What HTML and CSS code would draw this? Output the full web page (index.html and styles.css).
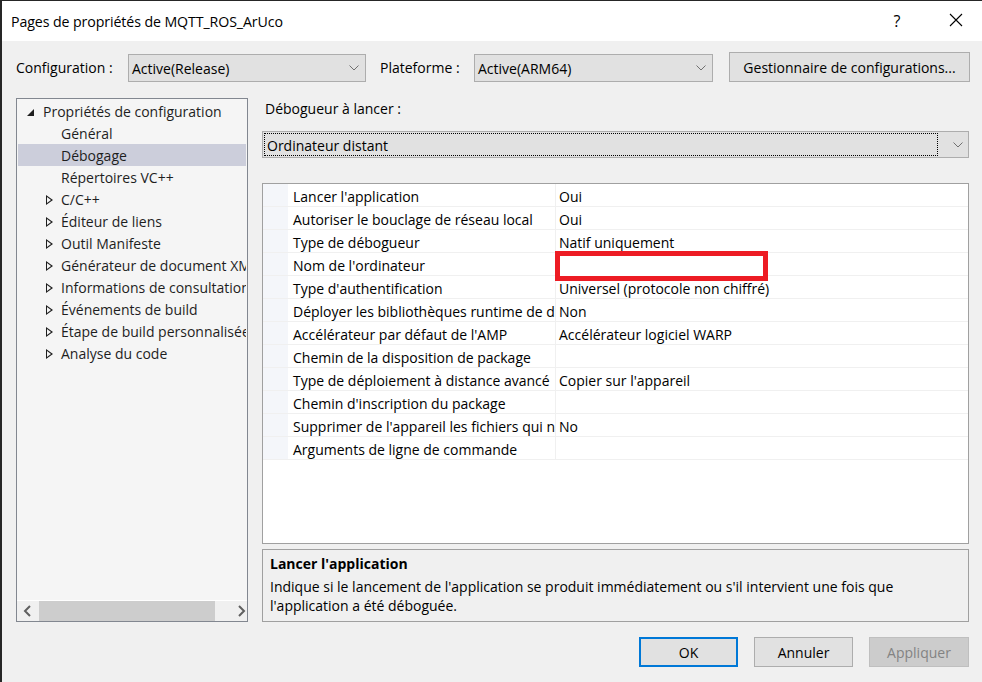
FILE: index.html
```html
<!DOCTYPE html>
<html lang="fr">
<head>
<meta charset="utf-8">
<title>Pages de propriétés de MQTT_ROS_ArUco</title>
<link rel="stylesheet" href="styles.css">
</head>
<body>
<div class="window">
  <div class="titlebar">
    <span class="title">Pages de propriétés de MQTT_ROS_ArUco</span>
    <div class="tb-btns">
      <span class="help">?</span>
      <span class="close"><svg width="14" height="14" viewBox="0 0 14 14"><path d="M1 1 L13 13 M13 1 L1 13" stroke="#000" stroke-width="1.1" fill="none"/></svg></span>
    </div>
  </div>

  <div class="config-row">
    <span class="lbl lbl-config">Configuration :</span>
    <div class="select sel-config"><span class="sel-text">Active(Release)</span><svg class="chev" width="10" height="6" viewBox="0 0 10 6"><path d="M0.5 0.5 L5 5 L9.5 0.5" stroke="#707070" stroke-width="1" fill="none"/></svg></div>
    <span class="lbl lbl-plat">Plateforme :</span>
    <div class="select sel-plat"><span class="sel-text">Active(ARM64)</span><svg class="chev" width="10" height="6" viewBox="0 0 10 6"><path d="M0.5 0.5 L5 5 L9.5 0.5" stroke="#707070" stroke-width="1" fill="none"/></svg></div>
    <button class="btn btn-mgr">Gestionnaire de configurations...</button>
  </div>

  <div class="main">
    <div class="tree">
      <ul class="tree-list">
        <li class="node root"><span class="tw tw-open"></span>Propriétés de configuration</li>
        <li class="node leaf">Général</li>
        <li class="node leaf selected">Débogage</li>
        <li class="node leaf">Répertoires VC++</li>
        <li class="node closed"><span class="tw tw-closed"></span>C/C++</li>
        <li class="node closed"><span class="tw tw-closed"></span>Éditeur de liens</li>
        <li class="node closed"><span class="tw tw-closed"></span>Outil Manifeste</li>
        <li class="node closed"><span class="tw tw-closed"></span>Générateur de document XML</li>
        <li class="node closed"><span class="tw tw-closed"></span>Informations de consultation</li>
        <li class="node closed"><span class="tw tw-closed"></span>Événements de build</li>
        <li class="node closed"><span class="tw tw-closed"></span>Étape de build personnalisée</li>
        <li class="node closed"><span class="tw tw-closed"></span>Analyse du code</li>
      </ul>
      <div class="hscroll">
        <span class="sb-arrow"><svg width="9" height="12" viewBox="0 0 9 12"><path d="M7 1 L2 6 L7 11" stroke="#606060" stroke-width="2" fill="none"/></svg></span>
        <span class="sb-track"><span class="sb-thumb"></span></span>
        <span class="sb-arrow"><svg width="9" height="12" viewBox="0 0 9 12"><path d="M2 1 L7 6 L2 11" stroke="#606060" stroke-width="2" fill="none"/></svg></span>
      </div>
    </div>

    <div class="pane">
      <div class="pane-label">Débogueur à lancer :</div>
      <div class="select sel-debugger">
        <span class="focus-box">Ordinateur distant</span>
        <span class="chev-cell"><svg width="10" height="6" viewBox="0 0 10 6"><path d="M0.5 0.5 L5 5 L9.5 0.5" stroke="#707070" stroke-width="1" fill="none"/></svg></span>
      </div>

      <div class="grid">
        <div class="row"><span class="margin"></span><span class="name">Lancer l'application</span><span class="value">Oui</span></div>
        <div class="row"><span class="margin"></span><span class="name">Autoriser le bouclage de réseau local</span><span class="value">Oui</span></div>
        <div class="row"><span class="margin"></span><span class="name">Type de débogueur</span><span class="value">Natif uniquement</span></div>
        <div class="row"><span class="margin"></span><span class="name">Nom de l'ordinateur</span><span class="value"></span></div>
        <div class="row"><span class="margin"></span><span class="name">Type d'authentification</span><span class="value">Universel (protocole non chiffré)</span></div>
        <div class="row"><span class="margin"></span><span class="name">Déployer les bibliothèques runtime de débogage Visual C++</span><span class="value">Non</span></div>
        <div class="row"><span class="margin"></span><span class="name">Accélérateur par défaut de l'AMP</span><span class="value">Accélérateur logiciel WARP</span></div>
        <div class="row"><span class="margin"></span><span class="name">Chemin de la disposition de package</span><span class="value"></span></div>
        <div class="row"><span class="margin"></span><span class="name">Type de déploiement à distance avancé</span><span class="value">Copier sur l'appareil</span></div>
        <div class="row"><span class="margin"></span><span class="name">Chemin d'inscription du package</span><span class="value"></span></div>
        <div class="row"><span class="margin"></span><span class="name">Supprimer de l'appareil les fichiers qui ne font pas partie de la disposition</span><span class="value">No</span></div>
        <div class="row"><span class="margin"></span><span class="name">Arguments de ligne de commande</span><span class="value"></span></div>
        <div class="redact"></div>
      </div>

      <div class="desc">
        <div class="desc-title">Lancer l'application</div>
        <div class="desc-text">Indique si le lancement de l'application se produit immédiatement ou s'il intervient une fois que l'application a été déboguée.</div>
      </div>
    </div>
  </div>

  <div class="footer">
    <button class="btn btn-ok">OK</button>
    <button class="btn btn-cancel">Annuler</button>
    <button class="btn btn-apply" disabled>Appliquer</button>
  </div>
</div>
</body>
</html>
```

FILE: styles.css
```css
* { box-sizing: border-box; }

html, body {
  margin: 0;
  padding: 0;
  height: 100%;
}

body {
  background: #262626;
  padding: 1px 0 0 2px;
  font-family: "Open Sans", "Noto Sans", "Liberation Sans", sans-serif;
  font-size: 14px;
  color: #000;
  overflow: hidden;
}

.window {
  width: 980px;
  height: 681px;
  background: #f0f0f0;
  display: flex;
  flex-direction: column;
}

/* Title bar */
.titlebar {
  height: 40px;
  background: #fff;
  display: flex;
  align-items: center;
  justify-content: space-between;
  padding-left: 9px;
}

.title {
  font-size: 14.2px;
  color: #000;
  letter-spacing: -0.1px;
}

.tb-btns {
  display: flex;
  align-items: center;
  height: 100%;
}

.help {
  width: 46px;
  text-align: center;
  font-size: 16px;
  margin-right: 13px;
  margin-top: -1px;
}

.close {
  width: 46px;
  height: 100%;
  display: flex;
  align-items: center;
  justify-content: center;
  margin-top: -2px;
  margin-right: 3px;
}

/* Config row */
.config-row {
  display: flex;
  align-items: center;
  height: 30px;
  margin-top: 11px;
  padding-left: 14px;
}

.lbl {
  white-space: nowrap;
}

.lbl-config { width: 112px; }
.lbl-plat { width: 94px; margin-left: 14px; }

.select {
  height: 28px;
  background: #e1e1e1;
  border: 1px solid #adadad;
  display: flex;
  align-items: center;
  justify-content: space-between;
  padding: 0 6px 0 3px;
  margin-top: 2px;
}

.sel-config { width: 238px; }
.sel-plat { width: 239px; }

.sel-text {
  white-space: nowrap;
}

.chev { display: block; }

.btn {
  font-family: inherit;
  font-size: 14px;
  background: #e1e1e1;
  border: 1px solid #adadad;
  color: #000;
  height: 30px;
  padding: 0;
  margin: 0;
}

.btn-mgr {
  width: 241px;
  margin-left: 16px;
}

/* Main */
.main {
  display: flex;
  gap: 14px;
  margin-top: 16px;
  padding-left: 14px;
}

.tree {
  width: 232px;
  height: 524px;
  border: 1px solid #828790;
  background: #f5f5f5;
  display: flex;
  flex-direction: column;
}

.tree-list {
  list-style: none;
  margin: 0;
  padding: 1px 1px 0 1px;
  flex: 1;
  overflow: hidden;
}

.node {
  height: 22px;
  padding-top: 1px;
  line-height: 21px;
  white-space: nowrap;
  overflow: hidden;
  color: #1e1e1e;
  display: flex;
  align-items: center;
}

.node.root { padding-left: 9px; }
.node.leaf { padding-left: 43px; }
.node.closed { padding-left: 28px; }

.node.selected { background: #cccedb; }

.tw {
  display: inline-block;
  flex: none;
}

.tw-open {
  width: 0;
  height: 0;
  border-left: 7px solid transparent;
  border-bottom: 7px solid #1e1e1e;
  margin-right: 9px;
  margin-top: 1px;
}

.tw-closed {
  width: 0;
  height: 0;
  border-top: 5px solid transparent;
  border-bottom: 5px solid transparent;
  border-left: 7px solid #1e1e1e;
  position: relative;
  margin-right: 8px;
}

.tw-closed::after {
  content: "";
  position: absolute;
  left: -6px;
  top: -3px;
  border-top: 3px solid transparent;
  border-bottom: 3px solid transparent;
  border-left: 4px solid #f5f5f5;
}

.hscroll {
  height: 21px;
  border-top: 1px solid #fff;
  background: #f0f0f0;
  display: flex;
  align-items: stretch;
}

.sb-arrow {
  width: 21px;
  display: flex;
  align-items: center;
  justify-content: center;
  flex: none;
}

.hscroll .sb-arrow:first-child {
  justify-content: flex-start;
  padding-left: 6px;
}

.sb-track {
  flex: 1;
  display: flex;
  padding-right: 10px;
}

.sb-thumb {
  width: 176px;
  background: #cdcdcd;
  margin-left: 1px;
}

.hscroll .sb-arrow:last-child {
  width: 31px;
  padding-left: 2px;
}

/* Right pane */
.pane {
  width: 707px;
  display: flex;
  flex-direction: column;
}

.pane-label {
  height: 20px;
  line-height: 20px;
  padding-left: 3px;
  padding-top: 1px;
}

.sel-debugger {
  margin-top: 13px;
  height: 27px;
  padding: 1px 1px 1px 1px;
  align-items: stretch;
}

.focus-box {
  flex: 1;
  border: 1px dotted #000;
  display: flex;
  align-items: center;
  padding-left: 2px;
  padding-top: 2px;
  margin-right: 12px;
}

.chev-cell {
  width: 16px;
  display: flex;
  align-items: center;
  justify-content: center;
  margin-right: 1px;
}

.grid {
  position: relative;
  margin-top: 25px;
  height: 361px;
  border: 1px solid #a0a0a0;
  background: #fff;
}

.row {
  display: flex;
  height: 23px;
  border-bottom: 1px solid #f0f0f0;
}

.margin {
  width: 25px;
  background: #f4f6fa;
  flex: none;
}

.name {
  width: 268px;
  flex: none;
  border-right: 1px solid #f0f0f0;
  padding-left: 5px;
  padding-top: 3px;
  white-space: nowrap;
  overflow: hidden;
  line-height: 19px;
}

.value {
  flex: 1;
  padding-left: 3px;
  padding-top: 3px;
  white-space: nowrap;
  line-height: 19px;
}

.redact {
  position: absolute;
  left: 292px;
  top: 67px;
  width: 213px;
  height: 30px;
  border: 5px solid #ed1c24;
  background: #fff;
}

.desc {
  margin-top: 5px;
  height: 73px;
  border: 1px solid #a0a0a0;
  background: #f0f0f0;
  padding: 3px 7px 0 7px;
}

.desc-title {
  font-weight: bold;
  height: 21px;
  line-height: 21px;
  margin-bottom: 3px;
}

.desc-text {
  line-height: 19px;
  padding-right: 60px;
}

/* Footer */
.footer {
  display: flex;
  justify-content: flex-end;
  gap: 16px;
  margin-top: 15px;
  padding-right: 13px;
}

.btn-ok {
  width: 99px;
  border: 2px solid #0078d7;
}

.btn-cancel { width: 99px; }

.btn-apply {
  width: 100px;
  background: #cccccc;
  border-color: #bfbfbf;
  color: #838383;
}
```
